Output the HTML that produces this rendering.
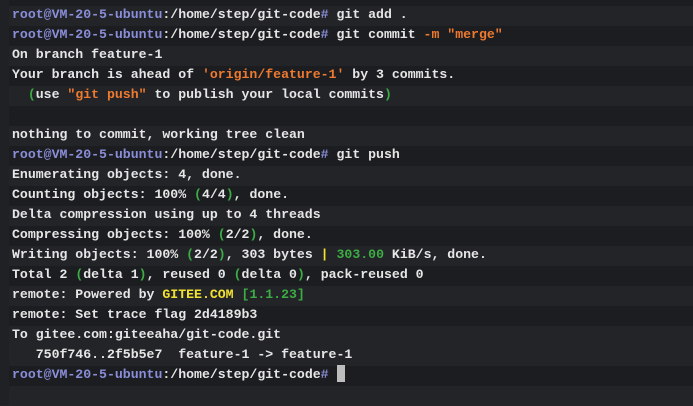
<!DOCTYPE html><html><head><style>
body{margin:0;width:693px;height:405px;overflow:hidden;background:#1c1d20;font-family:"Liberation Mono",monospace;font-size:13.2px;font-weight:bold;color:#e6e6e6}
.s{position:absolute;left:0;width:693px;height:20px;background:#232428}
.l{position:absolute;left:12px;white-space:pre;line-height:20px;height:20px}
.p{color:#8a8ed8}.o{color:#ee7a30}.g{color:#3cac44}.y{color:#f2e230}
.lb{position:absolute;left:0;top:0;width:9px;height:405px;background:#202124}
.c{display:inline-block;width:8px;height:17px;background:#bdbdbd;vertical-align:-4px}
</style></head><body>
<div class="s" style="top:6px"></div><div class="s" style="top:46px"></div><div class="s" style="top:86px"></div><div class="s" style="top:126px"></div><div class="s" style="top:166px"></div><div class="s" style="top:206px"></div><div class="s" style="top:246px"></div><div class="s" style="top:286px"></div><div class="s" style="top:326px"></div><div class="s" style="top:346px"></div><div class="s" style="top:386px"></div>
<div class="lb"></div>
<div class="l" style="top:-15px">create mode 100644 feature.txt</div>
<div class="l" style="top:5px"><span class="p">root@VM-20-5-ubuntu</span>:/home/step/git-code<span class="p">#</span> git add .</div>
<div class="l" style="top:25px"><span class="p">root@VM-20-5-ubuntu</span>:/home/step/git-code<span class="p">#</span> git commit <span class="o">-m "merge"</span></div>
<div class="l" style="top:45px">On branch feature-1</div>
<div class="l" style="top:65px">Your branch is ahead of <span class="o">'origin/feature-1'</span> by 3 commits.</div>
<div class="l" style="top:85px">  <span class="g">(</span>use <span class="o">"git push"</span> to publish your local commits<span class="g">)</span></div>
<div class="l" style="top:125px">nothing to commit, working tree clean</div>
<div class="l" style="top:145px"><span class="p">root@VM-20-5-ubuntu</span>:/home/step/git-code<span class="p">#</span> git push</div>
<div class="l" style="top:165px">Enumerating objects: 4, done.</div>
<div class="l" style="top:185px">Counting objects: 100% <span class="g">(</span>4/4<span class="g">)</span>, done.</div>
<div class="l" style="top:205px">Delta compression using up to 4 threads</div>
<div class="l" style="top:225px">Compressing objects: 100% <span class="g">(</span>2/2<span class="g">)</span>, done.</div>
<div class="l" style="top:245px">Writing objects: 100% <span class="g">(</span>2/2<span class="g">)</span>, 303 bytes <span class="y">|</span> <span class="g">303.00</span> KiB/s, done.</div>
<div class="l" style="top:265px">Total 2 <span class="g">(</span>delta 1<span class="g">)</span>, reused 0 <span class="g">(</span>delta 0<span class="g">)</span>, pack-reused 0</div>
<div class="l" style="top:285px">remote: Powered by <span class="y">GITEE.COM</span> <span class="g">[1.1.23]</span></div>
<div class="l" style="top:305px">remote: Set trace flag 2d4189b3</div>
<div class="l" style="top:325px">To gitee.com:giteeaha/git-code.git</div>
<div class="l" style="top:345px">   750f746..2f5b5e7  feature-1 -> feature-1</div>
<div class="l" style="top:365px"><span class="p">root@VM-20-5-ubuntu</span>:/home/step/git-code<span class="p">#</span> <span class="c"></span></div>
</body></html>
